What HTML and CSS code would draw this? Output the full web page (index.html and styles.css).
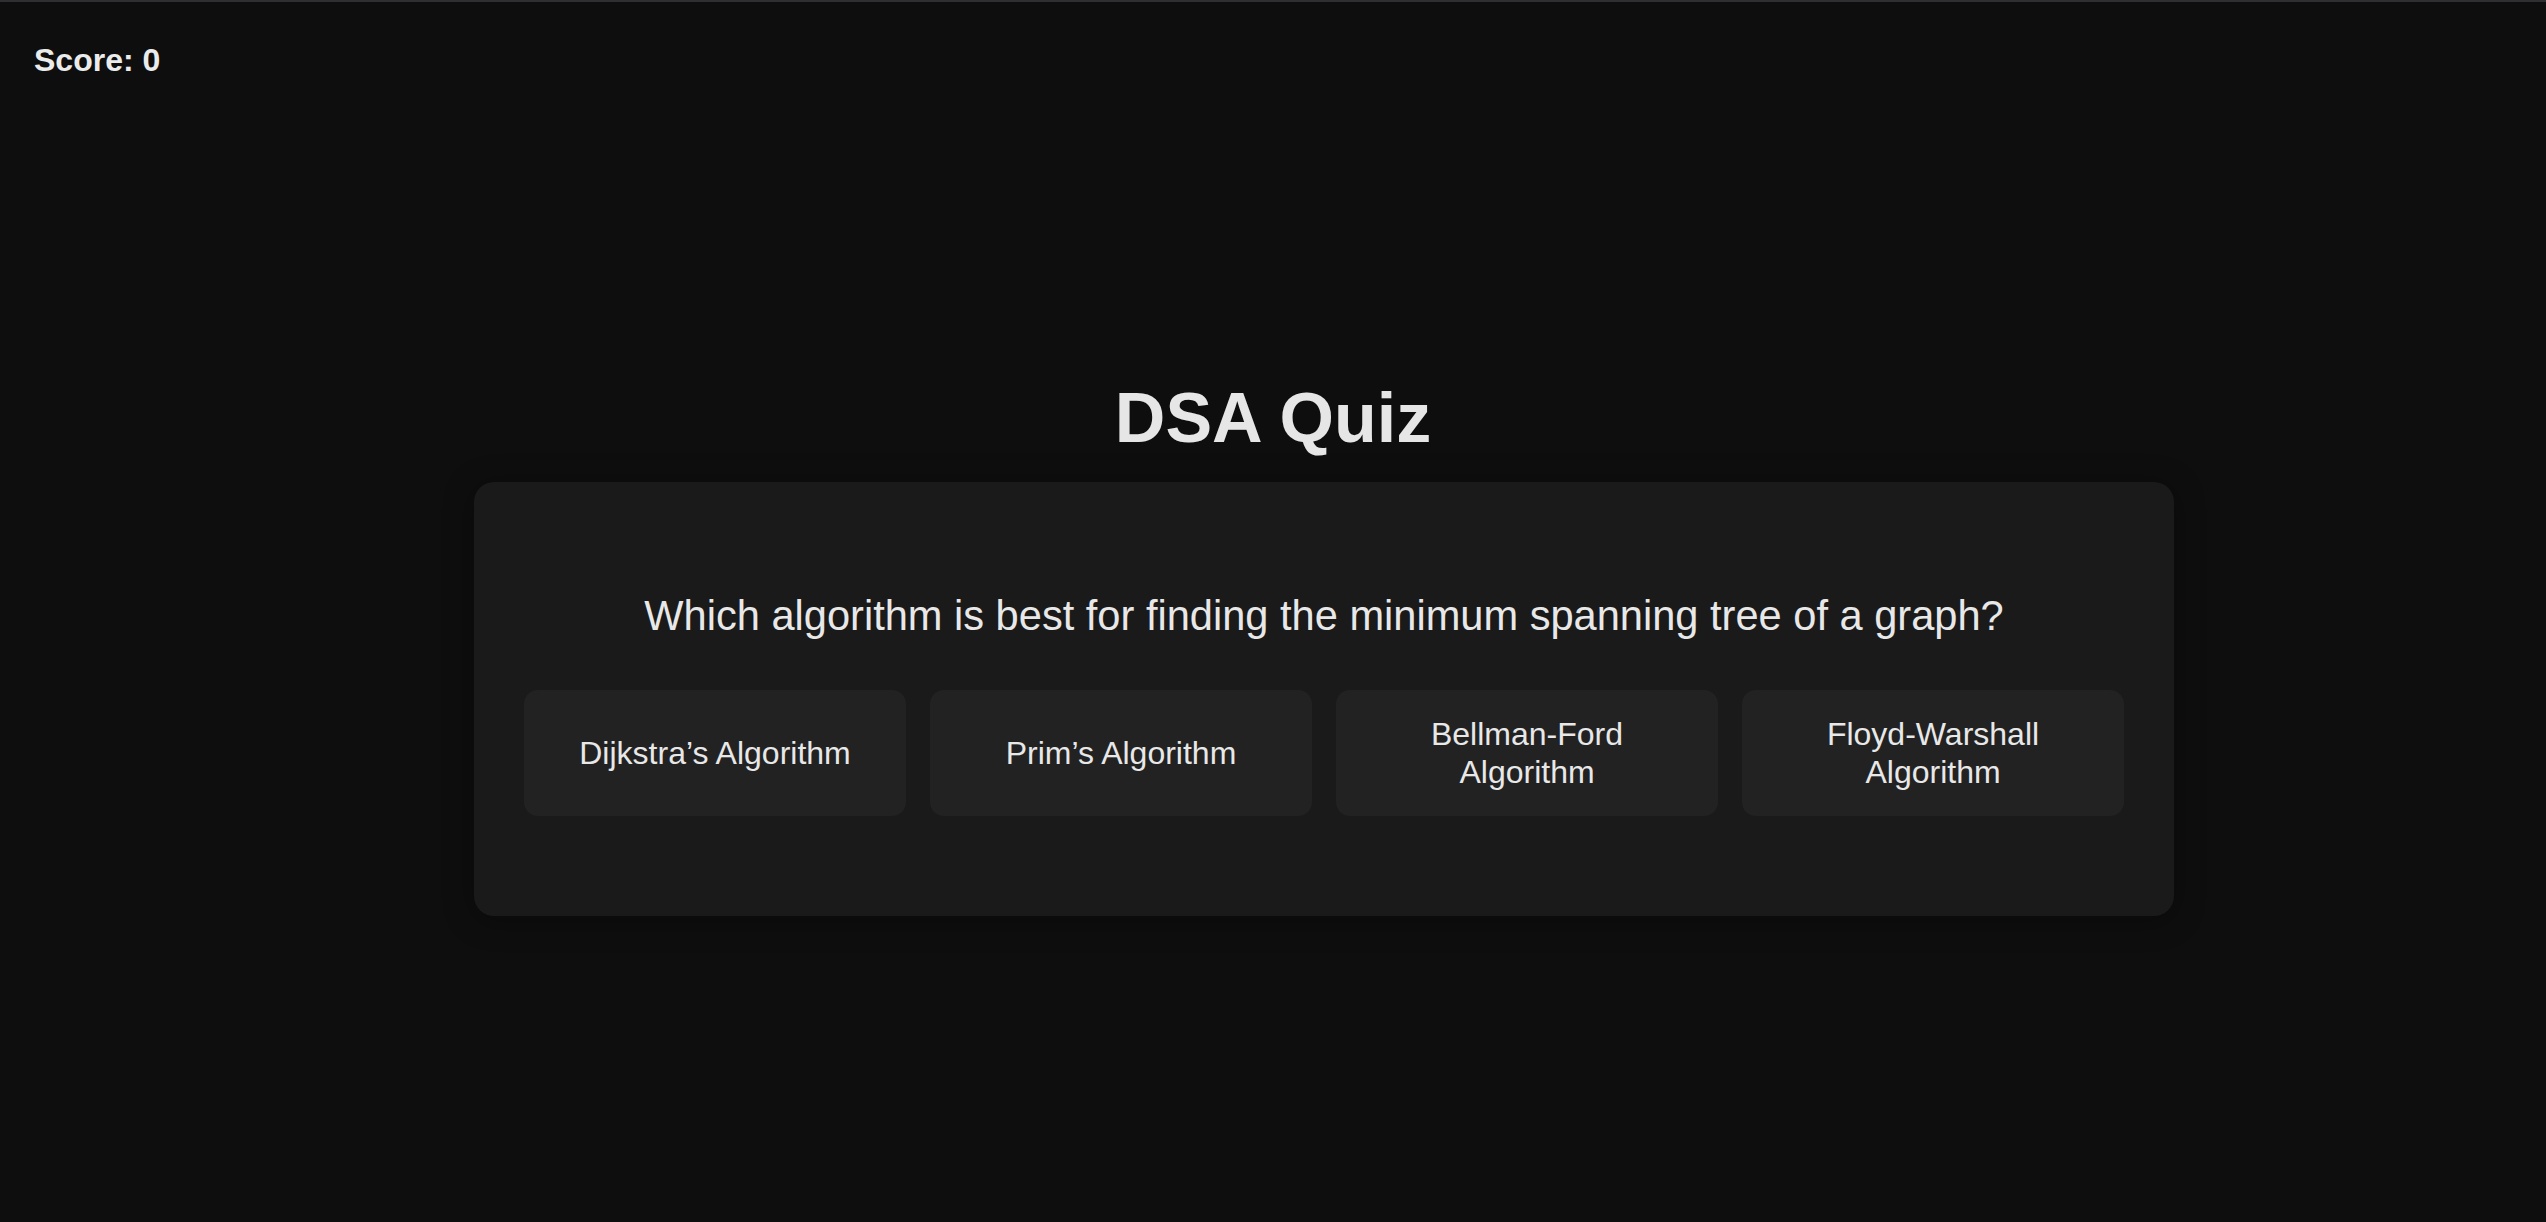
FILE: index.html
```html
<!DOCTYPE html>
<html lang="en">
<head>
<meta charset="utf-8">
<title>DSA Quiz</title>
<link rel="stylesheet" href="styles.css">
</head>
<body>
  <div class="score">Score: 0</div>
  <main class="quiz">
    <h1 class="title">DSA Quiz</h1>
    <section class="card">
      <p class="question">Which algorithm is best for finding the minimum spanning tree of a graph?</p>
      <div class="options">
        <button class="option">Dijkstra’s Algorithm</button>
        <button class="option">Prim’s Algorithm</button>
        <button class="option">Bellman-Ford Algorithm</button>
        <button class="option">Floyd-Warshall Algorithm</button>
      </div>
    </section>
  </main>
</body>
</html>
```

FILE: styles.css
```css
* { box-sizing: border-box; }

html, body {
  margin: 0;
  padding: 0;
}

body {
  background: #0e0e0e;
  color: #e6e6e6;
  font-family: "Liberation Sans", Arial, Helvetica, sans-serif;
  border-top: 2px solid #2e2e33;
  min-height: 100vh;
}

.score {
  padding: 40px 34px 0;
  font-size: 32px;
  font-weight: 700;
  line-height: 1.15;
  color: #ebebeb;
}

.quiz {
  display: flex;
  flex-direction: column;
  align-items: center;
  margin-top: 299px;
}

.title {
  margin: 0 0 24px;
  font-size: 70px;
  font-weight: 700;
  line-height: 1.15;
  color: #e6e6e6;
}

.card {
  width: 1700px;
  margin-left: 102px;
  padding: 50px;
  background: #1a1a1a;
  border-radius: 20px;
  box-shadow: 0 4px 30px rgba(0, 0, 0, 0.35);
  display: flex;
  flex-direction: column;
  align-items: center;
}

.question {
  margin: 60px 0 50px;
  font-size: 41.6px;
  line-height: 1.15;
  text-align: center;
  color: #e8e8e8;
}

.options {
  display: grid;
  grid-template-columns: repeat(4, 1fr);
  gap: 24px;
  width: 100%;
  margin-bottom: 50px;
}

.option {
  display: flex;
  align-items: center;
  justify-content: center;
  min-height: 126px;
  padding: 24px 40px;
  background: #222222;
  border: none;
  border-radius: 14px;
  color: #e8e8e8;
  font-family: inherit;
  font-size: 32px;
  line-height: 1.2;
  text-align: center;
}
```
